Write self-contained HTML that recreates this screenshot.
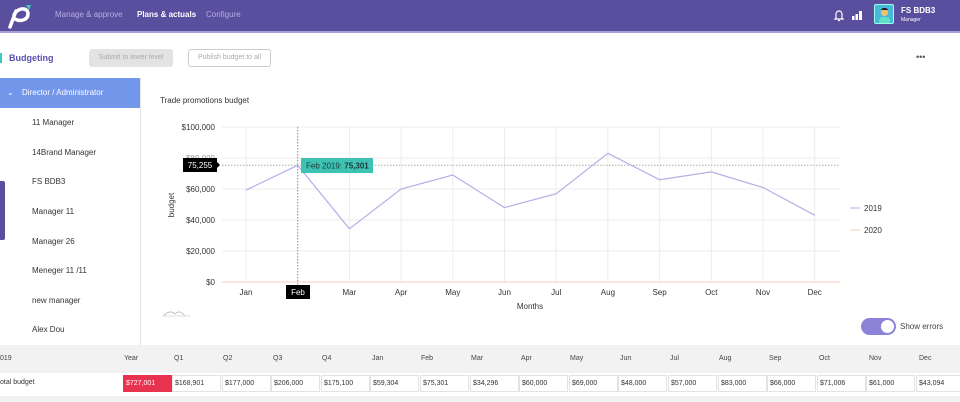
<!DOCTYPE html>
<html><head><meta charset="utf-8"><style>
*{margin:0;padding:0;box-sizing:border-box}
body{width:960px;height:402px;overflow:hidden;background:#fff;font-family:"Liberation Sans",sans-serif;position:relative;color:#333}
.top{position:absolute;left:0;top:0;width:960px;height:33px;background:#5a4f9f;border-bottom:2px solid #a89fd6}
.nav{position:absolute;top:10px;font-size:8px;color:#b6aee0}
.abs{position:absolute}
.side div{position:absolute;left:32px;font-size:8px;color:#333}
.th{position:absolute;top:355px;font-size:7px;color:#444}
.cell{position:absolute;top:375px;height:17px;width:49px;border:1px solid #e3e3e3;font-size:7px;color:#333;padding:4px 0 0 2px;background:#fff}
</style></head><body>
<div class="top"></div>
<svg class="abs" style="left:6px;top:3px" width="28" height="26" viewBox="0 0 28 26"><path d="M4 24 L10 8 M8 12 C12 4 22 4 22 11 C22 17 14 19 9 16" stroke="#fff" stroke-width="3.5" fill="none" stroke-linecap="round"/><path d="M20 2 L25 2 L23 7 Z" fill="#3ec9c0"/></svg>
<div class="nav" style="left:55px">Manage &amp; approve</div>
<div class="nav" style="left:137px;color:#fff;font-weight:bold">Plans &amp; actuals</div>
<div class="nav" style="left:206px">Configure</div>
<svg class="abs" style="left:833px;top:9px" width="12" height="13" viewBox="0 0 12 13"><path d="M3 9 V5 A3 3 0 0 1 9 5 V9 L10 10 H2 Z M5 11.5 H7" stroke="#fff" stroke-width="1.2" fill="none"/></svg>
<svg class="abs" style="left:852px;top:10px" width="12" height="10"><rect x="0" y="6" width="2.5" height="4" fill="#fff"/><rect x="3.5" y="4" width="2.5" height="6" fill="#fff"/><rect x="7" y="1" width="3" height="9" fill="#fff"/></svg>
<div class="abs" style="left:874px;top:4px;width:20px;height:20px;background:#4ab8d8;border:1px solid #9fe;border-radius:2px;overflow:hidden"><div class="abs" style="left:6px;top:3px;width:7px;height:8px;background:#f5c26b;border-radius:3px 3px 4px 4px;border-top:2px solid #222"></div><div class="abs" style="left:4px;top:12px;width:11px;height:8px;background:#5fe0c8;border-radius:4px 4px 0 0"></div></div>
<div class="abs" style="left:901px;top:6px;font-size:8px;color:#fff;font-weight:bold">FS BDB3</div>
<div class="abs" style="left:901px;top:17px;font-size:5px;color:#fff">Manager</div>

<div class="abs" style="left:0;top:53px;width:2px;height:10px;background:#3ec9c0"></div>
<div class="abs" style="left:9px;top:53px;font-size:9px;color:#5a4fb0;font-weight:bold">Budgeting</div>
<div class="abs" style="left:89px;top:49px;width:84px;height:18px;background:#e3e3e3;border-radius:3px;font-size:7px;color:#aaa;text-align:center;line-height:18px">Submit to lower level</div>
<div class="abs" style="left:188px;top:49px;width:83px;height:18px;border:1px solid #ccc;border-radius:3px;font-size:7px;color:#aaa;text-align:center;line-height:16px">Publish budget to all</div>
<div class="abs" style="left:916px;top:52px;font-size:9px;color:#555;letter-spacing:0">•••</div>

<div class="abs" style="left:0;top:78px;width:140px;height:30px;background:#7296ea"></div>
<div class="abs" style="left:7px;top:88px;font-size:8px;color:#fff">⌄</div>
<div class="abs" style="left:22px;top:88px;font-size:8px;color:#fff">Director / Administrator</div>
<div class="abs" style="left:140px;top:78px;width:1px;height:267px;background:#e6e6e6"></div>
<div class="side">
<div style="top:118px">11 Manager</div>
<div style="top:148px">14Brand Manager</div>
<div style="top:177px">FS BDB3</div>
<div style="top:207px">Manager 11</div>
<div style="top:237px">Manager 26</div>
<div style="top:266px">Meneger 11 /11</div>
<div style="top:296px">new manager</div>
<div style="top:325px">Alex Dou</div>
</div>
<div class="abs" style="left:0;top:181px;width:5px;height:59px;background:#5a4f9f;border-radius:0 2px 2px 0"></div>

<div class="abs" style="left:160px;top:96px;font-size:8px;color:#333">Trade promotions budget</div>
<svg class="abs" style="left:0;top:0" width="960" height="345" font-family="Liberation Sans,sans-serif">
<g stroke="#ececec" stroke-width="1">
<line x1="222" y1="127" x2="840" y2="127"/><line x1="222" y1="158" x2="840" y2="158"/><line x1="222" y1="189" x2="840" y2="189"/><line x1="222" y1="220" x2="840" y2="220"/><line x1="222" y1="251" x2="840" y2="251"/>
<line x1="246" y1="127" x2="246" y2="282"/><line x1="349.4" y1="127" x2="349.4" y2="282"/><line x1="401.1" y1="127" x2="401.1" y2="282"/><line x1="452.8" y1="127" x2="452.8" y2="282"/><line x1="504.5" y1="127" x2="504.5" y2="282"/><line x1="556.2" y1="127" x2="556.2" y2="282"/><line x1="607.9" y1="127" x2="607.9" y2="282"/><line x1="659.6" y1="127" x2="659.6" y2="282"/><line x1="711.3" y1="127" x2="711.3" y2="282"/><line x1="763" y1="127" x2="763" y2="282"/><line x1="814.7" y1="127" x2="814.7" y2="282"/>
</g>
<line x1="222" y1="282" x2="840" y2="282" stroke="#f6d8cc" stroke-width="1.2"/>
<line x1="297.7" y1="127" x2="297.7" y2="285" stroke="#888" stroke-dasharray="1.5,1.5"/>
<line x1="222" y1="165.3" x2="840" y2="165.3" stroke="#aaa" stroke-dasharray="1.5,1.5"/>
<polyline fill="none" stroke="#b6aee6" stroke-width="1.2" points="246,190.1 297.7,165.3 349.4,228.8 401.1,189 452.8,175 504.5,207.6 556.2,193.7 607.9,153.3 659.6,179.7 711.3,171.9 763,187.5 814.7,215.2"/>
<g font-size="8" fill="#333" text-anchor="end">
<text x="215" y="130">$100,000</text><text x="215" y="161" fill="#999">$80,000</text><text x="215" y="192">$60,000</text><text x="215" y="223">$40,000</text><text x="215" y="254">$20,000</text><text x="215" y="285">$0</text>
</g>
<g font-size="8" fill="#333" text-anchor="middle">
<text x="246" y="295">Jan</text><text x="349.4" y="295">Mar</text><text x="401.1" y="295">Apr</text><text x="452.8" y="295">May</text><text x="504.5" y="295">Jun</text><text x="556.2" y="295">Jul</text><text x="607.9" y="295">Aug</text><text x="659.6" y="295">Sep</text><text x="711.3" y="295">Oct</text><text x="763" y="295">Nov</text><text x="814.7" y="295">Dec</text>
<text x="530" y="309">Months</text>
</g>
<rect x="286" y="285" width="24" height="14" fill="#000"/><text x="298" y="295" font-size="8" fill="#fff" text-anchor="middle">Feb</text>
<rect x="183" y="158" width="34" height="14" fill="#000"/><path d="M217 162 L220 165 L217 168Z" fill="#000"/><text x="200" y="168" font-size="8" fill="#fff" text-anchor="middle">75,255</text>
<rect x="301" y="158" width="72" height="15" fill="#3ec2b4"/><text x="306" y="168.5" font-size="8" fill="#1a3a3a">Feb 2019: <tspan font-weight="bold">75,301</tspan></text>
<text x="174" y="205" font-size="8" fill="#333" text-anchor="middle" transform="rotate(-90 174 205)">budget</text>
<line x1="850" y1="208" x2="860" y2="208" stroke="#b6aee6"/><text x="864" y="211" font-size="8" fill="#333">2019</text>
<line x1="850" y1="230" x2="860" y2="230" stroke="#f6c8b8"/><text x="864" y="233" font-size="8" fill="#333">2020</text>
<path d="M163 316 Q170 309 175 314 Q180 309 185 316" stroke="#bbb" fill="none" stroke-width="0.8"/><line x1="163" y1="316" x2="190" y2="316" stroke="#ddd"/>
</svg>
<div class="abs" style="left:861px;top:318px;width:35px;height:17px;background:#8c83d8;border-radius:9px"><div class="abs" style="left:20px;top:2px;width:13px;height:13px;border-radius:50%;background:#fff"></div></div>
<div class="abs" style="left:900px;top:322px;font-size:8px;color:#444">Show errors</div>

<div class="abs" style="left:0;top:345px;width:960px;height:28px;background:#f2f2f2"></div>
<div class="abs" style="left:0;top:373px;width:960px;height:22px;background:#fff"></div>
<div class="abs" style="left:0;top:396px;width:960px;height:6px;background:#f2f2f2"></div>
<div class="th" style="left:0">019</div>
<div class="th" style="left:124px">Year</div><div class="th" style="left:174px">Q1</div><div class="th" style="left:223px">Q2</div><div class="th" style="left:273px">Q3</div><div class="th" style="left:322px">Q4</div><div class="th" style="left:372px">Jan</div><div class="th" style="left:421px">Feb</div><div class="th" style="left:471px">Mar</div><div class="th" style="left:521px">Apr</div><div class="th" style="left:570px">May</div><div class="th" style="left:620px">Jun</div><div class="th" style="left:670px">Jul</div><div class="th" style="left:719px">Aug</div><div class="th" style="left:769px">Sep</div><div class="th" style="left:819px">Oct</div><div class="th" style="left:869px">Nov</div><div class="th" style="left:919px">Dec</div>
<div class="abs" style="left:0;top:379px;font-size:7px;color:#333">otal budget</div>
<div class="cell" style="left:123px;background:#e8334f;color:#fff;border-color:#e8334f">$727,001</div>
<div class="cell" style="left:172px">$168,901</div><div class="cell" style="left:222px">$177,000</div><div class="cell" style="left:271px">$206,000</div><div class="cell" style="left:321px">$175,100</div><div class="cell" style="left:370px">$59,304</div><div class="cell" style="left:420px">$75,301</div><div class="cell" style="left:470px">$34,296</div><div class="cell" style="left:519px">$60,000</div><div class="cell" style="left:569px">$69,000</div><div class="cell" style="left:618px">$48,000</div><div class="cell" style="left:668px">$57,000</div><div class="cell" style="left:718px">$83,000</div><div class="cell" style="left:767px">$66,000</div><div class="cell" style="left:817px">$71,006</div><div class="cell" style="left:866px">$61,000</div><div class="cell" style="left:916px">$43,094</div>
</body></html>
